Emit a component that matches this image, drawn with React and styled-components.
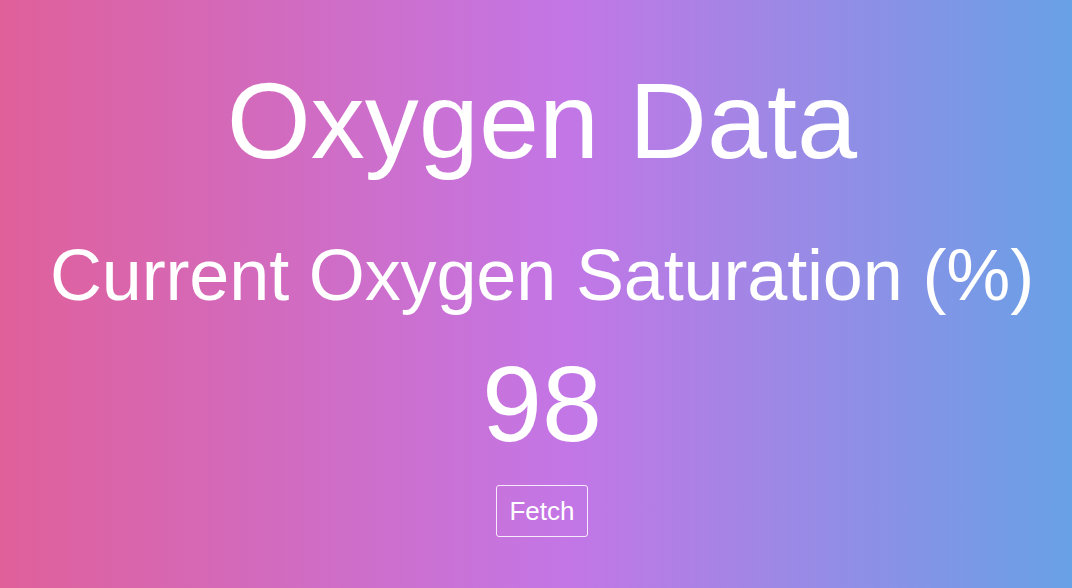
import React from 'react'
import styled, { createGlobalStyle } from "styled-components";

const GlobalStyle = createGlobalStyle`
  html, body {
    margin: 0;
    padding: 0;
    height: 100%;
  }
  #root {
    height: 100%;
  }
`;

const StyledPage = styled.div`
    display: flex;
    flex-direction: column;
    align-items: center;
    box-sizing: border-box;
    width: 100%;
    min-height: 100vh;
    padding: 67px 0 0 12px;
    background: linear-gradient(to right, #e0609a 0%, #c376e6 53%, #68a1e6 100%);
    color: white;
    font-family: "Liberation Sans", Arial, Helvetica, sans-serif;
`;

const StyledTitle = styled.h1`
    margin: 0;
    font-size: 108px;
    font-weight: 400;
    line-height: 1;
`;

const StyledLabel = styled.h2`
    margin: 64px 0 0;
    font-size: 72px;
    font-weight: 400;
    line-height: 1;
    letter-spacing: -0.15px;
`;

const StyledValue = styled.div`
    margin-top: 39px;
    font-size: 108px;
    line-height: 1;
`;

const StyledButton = styled.button`
    margin-top: 27px;
    width: 92px;
    height: 52px;
    padding: 0;
    background: transparent;
    border: 1px solid rgba(255, 255, 255, 0.85);
    border-radius: 3px;
    color: white;
    font-family: inherit;
    font-size: 26px;
    cursor: pointer;
`;

function App() {
    const value = 98;

    return (
        <>
            <GlobalStyle />
            <StyledPage>
                <StyledTitle>Oxygen Data</StyledTitle>
                <StyledLabel>Current Oxygen Saturation (%)</StyledLabel>
                <StyledValue>{value}</StyledValue>
                <StyledButton>Fetch</StyledButton>
            </StyledPage>
        </>
    )
}

export default App
